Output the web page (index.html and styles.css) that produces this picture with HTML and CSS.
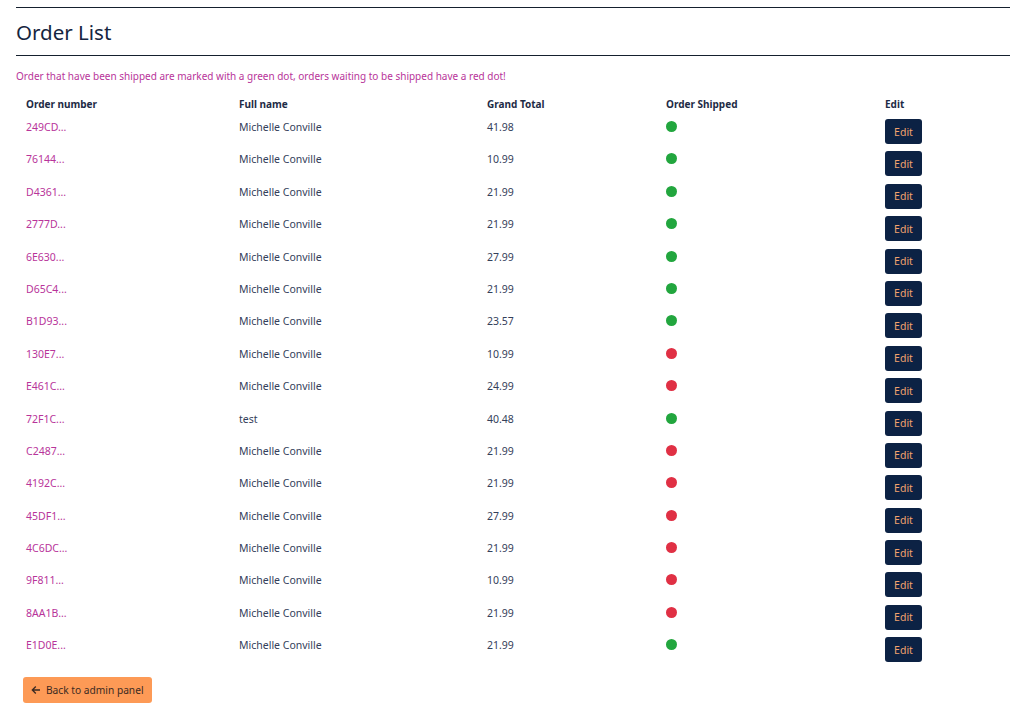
FILE: index.html
```html
<!DOCTYPE html>
<html lang="en">
<head>
<meta charset="utf-8">
<title>Order List</title>
<link rel="stylesheet" href="styles.css">
</head>
<body>
<div class="page">
  <header class="heading">
    <h1 class="title">Order List</h1>
  </header>
  <p class="note">Order that have been shipped are marked with a green dot, orders waiting to be shipped have a red dot!</p>
  <table class="orders">
    <thead>
      <tr>
        <th class="c-num">Order number</th>
        <th class="c-name">Full name</th>
        <th class="c-total">Grand Total</th>
        <th class="c-ship">Order Shipped</th>
        <th class="c-edit">Edit</th>
      </tr>
    </thead>
    <tbody>
      <tr><td class="num">249CD...</td><td>Michelle Conville</td><td>41.98</td><td><span class="dot ok"></span></td><td><button class="edit">Edit</button></td></tr>
      <tr><td class="num">76144...</td><td>Michelle Conville</td><td>10.99</td><td><span class="dot ok"></span></td><td><button class="edit">Edit</button></td></tr>
      <tr><td class="num">D4361...</td><td>Michelle Conville</td><td>21.99</td><td><span class="dot ok"></span></td><td><button class="edit">Edit</button></td></tr>
      <tr><td class="num">2777D...</td><td>Michelle Conville</td><td>21.99</td><td><span class="dot ok"></span></td><td><button class="edit">Edit</button></td></tr>
      <tr><td class="num">6E630...</td><td>Michelle Conville</td><td>27.99</td><td><span class="dot ok"></span></td><td><button class="edit">Edit</button></td></tr>
      <tr><td class="num">D65C4...</td><td>Michelle Conville</td><td>21.99</td><td><span class="dot ok"></span></td><td><button class="edit">Edit</button></td></tr>
      <tr><td class="num">B1D93...</td><td>Michelle Conville</td><td>23.57</td><td><span class="dot ok"></span></td><td><button class="edit">Edit</button></td></tr>
      <tr><td class="num">130E7...</td><td>Michelle Conville</td><td>10.99</td><td><span class="dot no"></span></td><td><button class="edit">Edit</button></td></tr>
      <tr><td class="num">E461C...</td><td>Michelle Conville</td><td>24.99</td><td><span class="dot no"></span></td><td><button class="edit">Edit</button></td></tr>
      <tr><td class="num">72F1C...</td><td>test</td><td>40.48</td><td><span class="dot ok"></span></td><td><button class="edit">Edit</button></td></tr>
      <tr><td class="num">C2487...</td><td>Michelle Conville</td><td>21.99</td><td><span class="dot no"></span></td><td><button class="edit">Edit</button></td></tr>
      <tr><td class="num">4192C...</td><td>Michelle Conville</td><td>21.99</td><td><span class="dot no"></span></td><td><button class="edit">Edit</button></td></tr>
      <tr><td class="num">45DF1...</td><td>Michelle Conville</td><td>27.99</td><td><span class="dot no"></span></td><td><button class="edit">Edit</button></td></tr>
      <tr><td class="num">4C6DC...</td><td>Michelle Conville</td><td>21.99</td><td><span class="dot no"></span></td><td><button class="edit">Edit</button></td></tr>
      <tr><td class="num">9F811...</td><td>Michelle Conville</td><td>10.99</td><td><span class="dot no"></span></td><td><button class="edit">Edit</button></td></tr>
      <tr><td class="num">8AA1B...</td><td>Michelle Conville</td><td>21.99</td><td><span class="dot no"></span></td><td><button class="edit">Edit</button></td></tr>
      <tr><td class="num">E1D0E...</td><td>Michelle Conville</td><td>21.99</td><td><span class="dot ok"></span></td><td><button class="edit">Edit</button></td></tr>
    </tbody>
  </table>
  <div class="footer">
    <button class="back"><svg class="arrow" width="10" height="10" viewBox="0 0 10 10"><path d="M9 5H1.5M4.8 1.5L1.3 5l3.5 3.5" fill="none" stroke="currentColor" stroke-width="1.3"/></svg>Back to admin panel</button>
  </div>
</div>
</body>
</html>
```

FILE: styles.css
```css
* { box-sizing: border-box; }
html, body { margin: 0; padding: 0; background: #fff; }
body {
  font-family: "Noto Sans", "Open Sans", sans-serif;
  color: #1d2b45;
  font-size: 11px;
}
.page { padding: 7px 13px 12px 16px; }
.heading {
  border-top: 1.5px solid #15202e;
  border-bottom: 1.5px solid #15202e;
  height: 49px;
  display: flex;
  align-items: center;
}
.title {
  margin: 0;
  font-size: 20.5px;
  font-weight: 400;
  color: #152540;
  line-height: 1;
  padding-top: 1px;
}
.note {
  margin: 12px 0 0 0;
  line-height: 16px;
  font-size: 10px;
  color: #b8349a;
}
.orders {
  border-collapse: collapse;
  width: 100%;
  margin-top: 10px;
  table-layout: fixed;
}
.orders th {
  text-align: left;
  font-weight: 700;
  font-size: 10px;
  line-height: 16px;
  padding: 2px 10px 3px;
  color: #1d2b45;
}
.c-num { width: 213px; }
.c-name { width: 248px; }
.c-total { width: 179px; }
.c-ship { width: 219px; }
.orders td {
  vertical-align: top;
  padding: 4px 10px 3.4px;
  line-height: 16px;
  font-size: 10.5px;
  color: #34405a;
}
.orders td.num { color: #b8349a; }
.dot {
  display: inline-block;
  width: 11px;
  height: 11px;
  border-radius: 50%;
  margin-top: 2px;
  vertical-align: top;
}
.dot.ok { background: #22a63e; }
.dot.no { background: #e03044; }
.edit {
  display: block;
  width: 37px;
  height: 25px;
  border: 0;
  border-radius: 3px;
  background: #0c2244;
  color: #f3a26e;
  font-family: inherit;
  font-size: 10.5px;
  padding: 0;
  cursor: pointer;
}
.footer { padding: 11px 0 0 7px; }
.back {
  display: inline-flex;
  align-items: center;
  gap: 5px;
  height: 26px;
  padding: 0 8px 0 8px;
  border: 0;
  border-radius: 3px;
  background: #fd9a56;
  color: #3b2a22;
  font-family: inherit;
  font-size: 10.2px;
  cursor: pointer;
}
.arrow { display: block; }
```
